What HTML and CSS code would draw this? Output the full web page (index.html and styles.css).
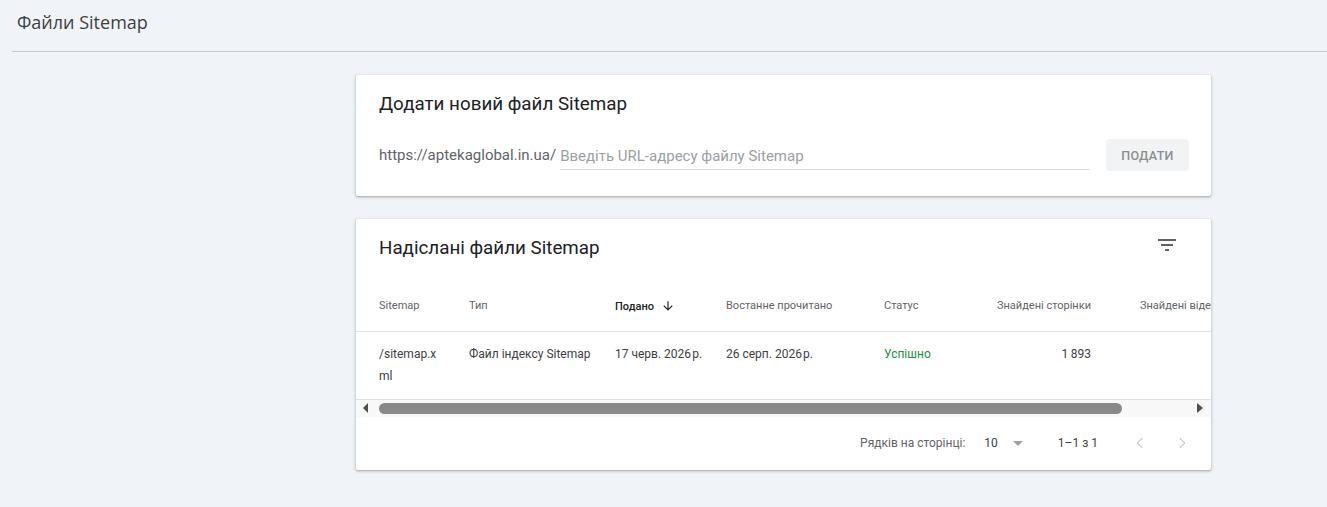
FILE: index.html
```html
<!DOCTYPE html>
<html lang="uk">
<head>
    <meta charset="UTF-8">
    <meta name="viewport" content="width=device-width, initial-scale=1.0">
    <title>Файли Sitemap</title>
    <link rel="stylesheet" href="styles.css">
</head>
<body>
    <header class="page-header">
        <h1>Файли Sitemap</h1>
    </header>

    <main class="content">
        <section class="card add-card">
            <h2 class="card-title">Додати новий файл Sitemap</h2>
            <form class="add-row">
                <span class="url-prefix">https://aptekaglobal.in.ua/</span>
                <input type="text" class="url-input" placeholder="Введіть URL-адресу файлу Sitemap">
                <button type="submit" class="submit-btn" disabled>ПОДАТИ</button>
            </form>
        </section>

        <section class="card list-card">
            <div class="list-head">
                <h2 class="card-title">Надіслані файли Sitemap</h2>
                <button class="icon-btn filter-btn" title="Фільтр">
                    <svg viewBox="0 0 24 24" width="24" height="24"><path d="M10 18h4v-2h-4v2zM3 6v2h18V6H3zm3 7h12v-2H6v2z"/></svg>
                </button>
            </div>

            <div class="table-wrap">
                <table class="sitemaps">
                    <colgroup>
                        <col class="c-sitemap">
                        <col class="c-type">
                        <col class="c-submitted">
                        <col class="c-read">
                        <col class="c-status">
                        <col class="c-pages">
                        <col class="c-videos">
                    </colgroup>
                    <thead>
                        <tr>
                            <th>Sitemap</th>
                            <th>Тип</th>
                            <th class="sorted">Подано
                                <svg class="sort-arrow" viewBox="0 0 24 24" width="14" height="14"><path d="M20 12l-1.41-1.41L13 16.17V4h-2v12.17l-5.58-5.59L4 12l8 8 8-8z"/></svg>
                            </th>
                            <th>Востанне прочитано</th>
                            <th>Статус</th>
                            <th class="num">Знайдені сторінки</th>
                            <th class="last">Знайдені відео</th>
                        </tr>
                    </thead>
                    <tbody>
                        <tr>
                            <td class="path">/sitemap.xml</td>
                            <td>Файл індексу Sitemap</td>
                            <td>17 черв. 2026&#8202;р.</td>
                            <td>26 серп. 2026&#8202;р.</td>
                            <td class="ok">Успішно</td>
                            <td class="num">1&#8201;893</td>
                            <td class="last"></td>
                        </tr>
                    </tbody>
                </table>
            </div>

            <div class="hscroll">
                <span class="arrow arrow-left"></span>
                <div class="track"><div class="thumb"></div></div>
                <span class="arrow arrow-right"></span>
            </div>

            <div class="pager">
                <span class="pager-label">Рядків на сторінці:</span>
                <span class="pager-select">10 <span class="caret"></span></span>
                <span class="pager-range">1–1 з 1</span>
                <button class="icon-btn pager-btn" disabled>
                    <svg viewBox="0 0 24 24" width="24" height="24"><path d="M14.6 7.4L13.9 6.7 8.6 12l5.3 5.3.7-.7L10 12z"/></svg>
                </button>
                <button class="icon-btn pager-btn" disabled>
                    <svg viewBox="0 0 24 24" width="24" height="24"><path d="M9.4 7.4l.7-.7 5.3 5.3-5.3 5.3-.7-.7L14 12z"/></svg>
                </button>
            </div>
        </section>
    </main>
</body>
</html>
```

FILE: styles.css
```css
:root {
    --bg-page: #f0f3f8;
    --bg-card: #ffffff;
    --text-primary: #202124;
    --text-secondary: #5f6368;
    --text-hint: #9aa0a6;
    --line: #e0e0e0;
    --green: #1e8e3e;
}

* {
    margin: 0;
    padding: 0;
    box-sizing: border-box;
}

body {
    background-color: var(--bg-page);
    color: var(--text-primary);
    font-family: Roboto, 'Liberation Sans', Arial, sans-serif;
    min-height: 100vh;
}

.page-header {
    margin-left: 12px;
    height: 52px;
    padding: 9px 0 0 5px;
    border-bottom: 1px solid #c6c9cc;
}

.page-header h1 {
    font-family: 'Open Sans', Roboto, sans-serif;
    font-size: 18px;
    font-weight: 400;
    line-height: 26px;
    color: #3c4043;
}

.content {
    display: flex;
    flex-direction: column;
    gap: 23px;
    width: 855px;
    margin-left: 356px;
    padding-top: 23px;
}

.card {
    background-color: var(--bg-card);
    border-radius: 2px;
    box-shadow: 0 1px 2px rgba(60, 64, 67, 0.3), 0 1px 3px 1px rgba(60, 64, 67, 0.12);
}

.card-title {
    font-size: 18.8px;
    font-weight: 400;
    line-height: 22px;
    color: var(--text-primary);
}

/* add sitemap */

.add-card {
    padding: 18px 22px 25px 23px;
}

.add-row {
    display: flex;
    align-items: center;
    margin-top: 24px;
    height: 32px;
}

.url-prefix {
    font-size: 15px;
    color: var(--text-secondary);
}

.url-input {
    flex: 1;
    margin-left: 4px;
    height: 30px;
    padding-top: 2px;
    border: none;
    border-bottom: 1px solid #dadce0;
    font-family: inherit;
    font-size: 15px;
    color: var(--text-primary);
    background: transparent;
    outline: none;
}

.url-input::placeholder {
    color: var(--text-hint);
}

.submit-btn {
    margin-left: 16px;
    width: 83px;
    height: 32px;
    border: none;
    border-radius: 4px;
    background-color: #f1f3f4;
    color: #8a8e93;
    font-family: inherit;
    font-size: 12.5px;
    font-weight: 500;
    letter-spacing: 0.3px;
}

/* submitted list */

.list-head {
    display: flex;
    justify-content: space-between;
    align-items: flex-start;
    height: 56px;
    padding: 18px 32px 0 23px;
}

.icon-btn {
    display: flex;
    align-items: center;
    justify-content: center;
    border: none;
    background: none;
    cursor: pointer;
}

.icon-btn svg {
    fill: currentColor;
}

.filter-btn {
    color: var(--text-secondary);
    margin-top: -4px;
}

.table-wrap {
    overflow: hidden;
}

.sitemaps {
    table-layout: fixed;
    width: 959px;
    border-collapse: collapse;
}

.c-sitemap { width: 113px; }
.c-type { width: 146px; }
.c-submitted { width: 111px; }
.c-read { width: 158px; }
.c-status { width: 88px; }
.c-pages { width: 143px; }
.c-videos { width: 200px; }

.sitemaps th,
.sitemaps td {
    text-align: left;
    padding-right: 24px;
    white-space: nowrap;
    vertical-align: top;
}

.sitemaps th:first-child,
.sitemaps td:first-child {
    padding-left: 23px;
}

.sitemaps th {
    height: 56px;
    padding-top: 6px;
    vertical-align: middle;
    font-size: 11px;
    font-weight: 400;
    color: var(--text-secondary);
    border-bottom: 1px solid var(--line);
}

.sitemaps th.sorted {
    color: var(--text-primary);
    font-weight: 500;
}

.sort-arrow {
    vertical-align: -3px;
    margin-left: 4px;
    fill: var(--text-primary);
}

.sitemaps td {
    font-size: 12px;
    line-height: 22px;
    color: #3c4043;
    padding-top: 11px;
    padding-bottom: 12px;
    border-bottom: 1px solid var(--line);
}

.sitemaps td.path {
    white-space: normal;
    word-break: break-all;
}

.sitemaps .num {
    text-align: right;
}

.sitemaps .last {
    padding-left: 25px;
}

.sitemaps td.ok {
    color: var(--green);
}

/* fake horizontal scrollbar */

.hscroll {
    display: flex;
    align-items: center;
    height: 17px;
    background-color: #f8f8f8;
    padding: 0 8px 0 7px;
}

.arrow {
    width: 0;
    height: 0;
    border-top: 5px solid transparent;
    border-bottom: 5px solid transparent;
}

.arrow-left {
    border-right: 5px solid #505050;
}

.arrow-right {
    border-left: 6px solid #505050;
}

.track {
    flex: 1;
    padding: 0 6px 0 11px;
}

.thumb {
    width: 743px;
    height: 11px;
    border-radius: 6px;
    background-color: #898989;
}

/* pagination */

.pager {
    display: flex;
    align-items: center;
    justify-content: flex-end;
    height: 53px;
    padding: 0 17px 0 0;
    font-size: 12px;
    color: var(--text-secondary);
}

.pager-select {
    display: flex;
    align-items: center;
    margin-left: 19px;
    color: #3c4043;
}

.caret {
    width: 0;
    height: 0;
    margin-left: 15px;
    border-left: 5px solid transparent;
    border-right: 5px solid transparent;
    border-top: 5px solid var(--text-hint);
}

.pager-range {
    margin-left: 35px;
    color: #3c4043;
}

.pager-btn {
    width: 24px;
    height: 24px;
    margin-left: 30px;
    color: #bdc1c6;
    cursor: default;
}

.pager-btn + .pager-btn {
    margin-left: 18px;
}
```
